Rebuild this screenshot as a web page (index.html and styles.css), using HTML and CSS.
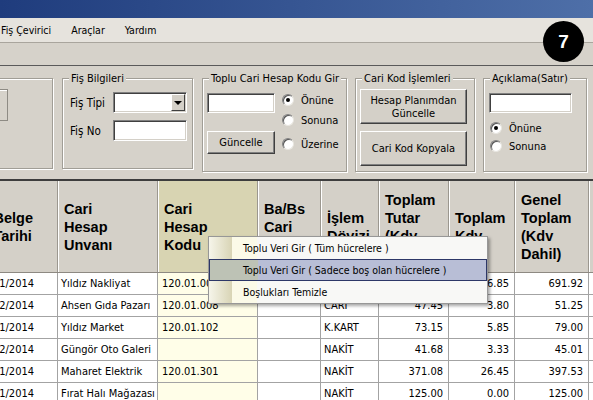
FILE: index.html
```html
<!DOCTYPE html>
<html lang="tr">
<head>
    <meta charset="UTF-8">
    <meta name="viewport" content="width=device-width, initial-scale=1.0">
    <title>Fiş Aktarım</title>
    <link rel="stylesheet" href="styles.css">
</head>
<body>
    <div class="titlebar"></div>

    <div class="menubar">
        <span class="menu-item">Fiş Çevirici</span>
        <span class="menu-item">Araçlar</span>
        <span class="menu-item">Yardım</span>
    </div>

    <div class="toolbar"></div>

    <div class="groups">
        <fieldset class="group g0">
            <legend>&nbsp;</legend>
            <div class="blank-box"></div>
        </fieldset>

        <fieldset class="group g1">
            <legend>Fiş Bilgileri</legend>
            <div class="form-grid">
                <label>Fiş Tipi</label>
                <div class="select"><span class="drop-btn"><span class="arrow"></span></span></div>
                <label>Fiş No</label>
                <div class="input"></div>
            </div>
        </fieldset>

        <fieldset class="group g2">
            <legend>Toplu Cari Hesap Kodu Gir</legend>
            <div class="cols">
                <div class="col-left">
                    <div class="input code-input"></div>
                    <div class="btn update-btn">Güncelle</div>
                </div>
                <div class="col-right">
                    <div class="radio-item"><span class="radio checked"></span>Önüne</div>
                    <div class="radio-item"><span class="radio"></span>Sonuna</div>
                    <div class="radio-item last"><span class="radio"></span>Üzerine</div>
                </div>
            </div>
        </fieldset>

        <fieldset class="group g3">
            <legend>Cari Kod İşlemleri</legend>
            <div class="btn big-btn">Hesap Planımdan<br>Güncelle</div>
            <div class="btn big-btn">Cari Kod Kopyala</div>
        </fieldset>

        <fieldset class="group g4">
            <legend>Açıklama(Satır)</legend>
            <div class="input note-input"></div>
            <div class="radio-list">
                <div class="radio-item small"><span class="radio checked"></span>Önüne</div>
                <div class="radio-item small"><span class="radio"></span>Sonuna</div>
            </div>
        </fieldset>

        <fieldset class="group g5">
            <legend>&nbsp;</legend>
        </fieldset>
    </div>

    <div class="grid">
        <table>
            <colgroup>
                <col class="w-date">
                <col class="w-name">
                <col class="w-code">
                <col class="w-babs">
                <col class="w-cur">
                <col class="w-sum">
                <col class="w-kdv">
                <col class="w-total">
                <col class="w-rest">
            </colgroup>
            <thead>
                <tr>
                    <th class="first">Belge<br>Tarihi</th>
                    <th>Cari<br>Hesap<br>Unvanı</th>
                    <th class="sel">Cari<br>Hesap<br>Kodu</th>
                    <th>Ba/Bs<br>Cari<br>Kodu</th>
                    <th>İşlem<br>Dövizi</th>
                    <th>Toplam<br>Tutar<br>(Kdv<br>Hariç)</th>
                    <th>Toplam<br>Kdv</th>
                    <th>Genel<br>Toplam<br>(Kdv<br>Dahil)</th>
                    <th></th>
                </tr>
            </thead>
            <tbody>
                <tr>
                    <td>05/01/2014</td>
                    <td>Yıldız Nakliyat</td>
                    <td class="sel">120.01.005</td>
                    <td></td>
                    <td>NAKİT</td>
                    <td class="num">645.07</td>
                    <td class="num">46.85</td>
                    <td class="num">691.92</td>
                    <td></td>
                </tr>
                <tr>
                    <td>07/02/2014</td>
                    <td>Ahsen Gıda Pazarı</td>
                    <td class="sel">120.01.008</td>
                    <td></td>
                    <td>CARİ</td>
                    <td class="num">47.45</td>
                    <td class="num">3.80</td>
                    <td class="num">51.25</td>
                    <td></td>
                </tr>
                <tr>
                    <td>11/01/2014</td>
                    <td>Yıldız Market</td>
                    <td class="sel">120.01.102</td>
                    <td></td>
                    <td>K.KART</td>
                    <td class="num">73.15</td>
                    <td class="num">5.85</td>
                    <td class="num">79.00</td>
                    <td></td>
                </tr>
                <tr>
                    <td>14/02/2014</td>
                    <td>Güngör Oto Galeri</td>
                    <td class="sel"></td>
                    <td></td>
                    <td>NAKİT</td>
                    <td class="num">41.68</td>
                    <td class="num">3.33</td>
                    <td class="num">45.01</td>
                    <td></td>
                </tr>
                <tr>
                    <td>18/01/2014</td>
                    <td>Maharet Elektrik</td>
                    <td class="sel">120.01.301</td>
                    <td></td>
                    <td>NAKİT</td>
                    <td class="num">371.08</td>
                    <td class="num">26.45</td>
                    <td class="num">397.53</td>
                    <td></td>
                </tr>
                <tr>
                    <td>21/01/2014</td>
                    <td>Fırat Halı Mağazası</td>
                    <td class="sel"></td>
                    <td></td>
                    <td>NAKİT</td>
                    <td class="num">125.00</td>
                    <td class="num">0.00</td>
                    <td class="num">125.00</td>
                    <td></td>
                </tr>
            </tbody>
        </table>
    </div>

    <div class="ctx-menu">
        <div class="ctx-item">Toplu Veri Gir ( Tüm hücrelere )</div>
        <div class="ctx-item active">Toplu Veri Gir ( Sadece boş olan hücrelere )</div>
        <div class="ctx-item">Boşlukları Temizle</div>
    </div>

    <div class="badge">7</div>
</body>
</html>
```

FILE: styles.css
```css
body {
    margin: 0;
    width: 593px;
    height: 400px;
    overflow: hidden;
    position: relative;
    background: #d6d2ca;
    font-family: "DejaVu Sans Condensed", "Liberation Sans", sans-serif;
    font-size: 11px;
    color: #000;
}

.titlebar {
    height: 18px;
    background: linear-gradient(to right, #1f3c7d, #4e6fa8);
}

.menubar {
    display: flex;
    height: 24px;
    line-height: 24px;
    padding-left: 1px;
    font-size: 10.5px;
    background: #e6e3dd;
    border-bottom: 1px solid #a9a59d;
}
.menu-item { padding: 0 10px; }
.menu-item:first-child { padding-left: 0; }

.toolbar {
    height: 22px;
    border-bottom: 1px solid #5a5a5a;
}

/* group boxes */
.groups {
    display: flex;
    align-items: flex-start;
    gap: 9px;
    height: 107px;
    padding-top: 6px;
    margin-left: -27px;
}
.group {
    box-sizing: border-box;
    flex: none;
    height: 100px;
    margin: 0;
    padding: 0 4px;
    border: 1px solid #a19e96;
    box-shadow: inset 1px 1px 0 #fff, 1px 1px 0 #fff;
}
.group legend {
    margin-left: 2px;
    padding: 0 2px;
    line-height: 13px;
    background: #d6d2ca;
}
.g0 { width: 80px; height: 97px; }
.g1 { width: 131px; height: 97px; }
.g2 { width: 145px; }
.g3 { width: 120px; margin-left: -1px; }
.g4 { width: 104px; margin-left: -1px; }
.g5 { width: 60px; }

.blank-box {
    width: 30px;
    height: 32px;
    margin-top: 4px;
    border: 1px solid #8e8b84;
    box-shadow: inset 1px 1px 0 #fff;
    box-sizing: border-box;
}

.input, .select {
    box-sizing: border-box;
    position: relative;
    background: #fff;
    border: 1px solid;
    border-color: #808080 #fff #fff #808080;
    box-shadow: inset 1px 1px 0 #404040, inset -1px -1px 0 #d4d0c8;
}

.form-grid {
    display: grid;
    grid-template-columns: 46px 74px;
    grid-auto-rows: 21px;
    row-gap: 7px;
    align-items: center;
    margin-top: 7px;
}
.form-grid label { padding-left: 3px; font-size: 11.5px; }
.form-grid .select, .form-grid .input { height: 21px; }

.drop-btn {
    position: absolute;
    right: 1px;
    top: 1px;
    width: 14px;
    height: 17px;
    box-sizing: border-box;
    background: #d4d0c8;
    border: 1px solid;
    border-color: #fff #404040 #404040 #fff;
    display: flex;
    align-items: center;
    justify-content: center;
}
.arrow {
    width: 0;
    height: 0;
    border-left: 4px solid transparent;
    border-right: 4px solid transparent;
    border-top: 4px solid #000;
}

.btn {
    box-sizing: border-box;
    display: flex;
    align-items: center;
    justify-content: center;
    text-align: center;
    line-height: 13px;
    background: #d4d0c8;
    border: 1px solid;
    border-color: #fff #404040 #404040 #fff;
    box-shadow: inset -1px -1px 0 #808080;
}

.cols { display: flex; gap: 7px; }
.col-left { width: 68px; }
.code-input { height: 20px; margin-top: 8px; }
.update-btn { height: 23px; margin-top: 18px; }
.col-right { margin-top: 5px; }

.radio-item {
    display: flex;
    align-items: center;
    gap: 7px;
    height: 20px;
}
.radio-item.last { margin-top: 4px; }
.radio-item.small { height: 18px; }
.radio {
    box-sizing: border-box;
    width: 12px;
    height: 12px;
    border-radius: 50%;
    background: #fff;
    border: 1px solid;
    border-color: #808080 #e8e6e0 #e8e6e0 #808080;
    box-shadow: inset 1px 1px 0 #555;
    display: flex;
    align-items: center;
    justify-content: center;
}
.radio.checked::after {
    content: "";
    width: 4px;
    height: 4px;
    border-radius: 50%;
    background: #000;
}

.big-btn { width: 107px; height: 35px; margin-top: 4px; }
.big-btn + .big-btn { margin-top: 7px; }

.note-input { width: 83px; height: 20px; margin: 8px 0 0 1px; }
.radio-list { margin: 6px 0 0 2px; }

/* data grid */
.grid {
    margin-left: -27px;
    border-top: 2px solid #3d3d3d;
}
table {
    border-collapse: collapse;
    table-layout: fixed;
    width: 655px;
}
.w-date { width: 84px; }
.w-name { width: 100px; }
.w-code { width: 100px; }
.w-babs { width: 63px; }
.w-cur { width: 58px; }
.w-sum { width: 70px; }
.w-kdv { width: 66px; }
.w-total { width: 74px; }
.w-rest { width: 40px; }

th {
    height: 91px;
    padding: 0 0 0 6px;
    text-align: left;
    vertical-align: middle;
    background: #d4d0c8;
    border-right: 1px solid #9b978f;
    border-bottom: 1px solid #8d8982;
    box-shadow: inset 1px 0 0 #fff;
    font: bold 14.5px/18px "Liberation Sans", Arial, sans-serif;
    white-space: nowrap;
    overflow: hidden;
}
th.first { padding-left: 20px; }
th.sel { background: #d8d4b2; }

td {
    height: 21px;
    padding: 0 3px;
    font-size: 11px;
    background: #fff;
    border: 1px solid #a3a3a3;
    white-space: nowrap;
    overflow: hidden;
}
td.sel { background: #fffee8; padding-left: 4px; }
td.num { text-align: right; padding-right: 5px; }

/* context menu */
.ctx-menu {
    position: absolute;
    left: 208px;
    top: 236px;
    width: 280px;
    box-sizing: border-box;
    font-size: 10.5px;
    border: 1px solid #979797;
    background: linear-gradient(to right, #f6f5ea 0, #d8d4b5 23px, #fbfae8 23px, #fbfae8 48px, #f8f8f6 48px);
    box-shadow: 2px 2px 3px rgba(0, 0, 0, 0.35);
}
.ctx-item {
    height: 22px;
    line-height: 22px;
    padding-left: 34px;
}
.ctx-item.active {
    box-sizing: border-box;
    line-height: 20px;
    padding-left: 33px;
    border: 1px solid #2d3767;
    background: linear-gradient(to right, #bdc2b5 48px, #b8bed6 48px);
}

.badge {
    position: absolute;
    left: 543px;
    top: 21px;
    width: 41px;
    height: 41px;
    border-radius: 50%;
    background: #000;
    color: #fff;
    text-align: center;
    font: bold 19px/41px "Liberation Sans", Arial, sans-serif;
}
```
